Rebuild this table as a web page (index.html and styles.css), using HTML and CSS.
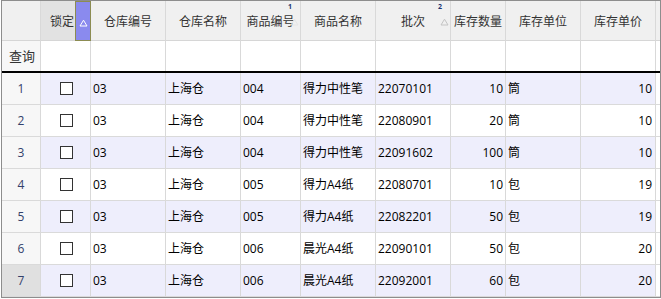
FILE: index.html
```html
<!DOCTYPE html>
<html lang="zh">
<head>
<meta charset="utf-8">
<link rel="stylesheet" href="styles.css">
</head>
<body>
<div class="grid">
  <div class="row head">
    <div class="c rh"></div>
    <div class="c lock-h"><span class="lbl">锁定</span><span class="sort-btn"><svg class="tri" width="9" height="8" viewBox="0 0 9 8"><path d="M4.5 1.2 L8 7 L1 7 Z" fill="none" stroke="currentColor" stroke-width="1"/></svg></span></div>
    <div class="c">仓库编号</div>
    <div class="c">仓库名称</div>
    <div class="c">商品编号<span class="ord">1</span><svg class="tri-abs faint" width="9" height="8" viewBox="0 0 9 8"><path d="M4.5 1.2 L8 7 L1 7 Z" fill="none" stroke="currentColor" stroke-width="1"/></svg></div>
    <div class="c">商品名称</div>
    <div class="c">批次<span class="ord">2</span><svg class="tri-abs" width="9" height="8" viewBox="0 0 9 8"><path d="M4.5 1.2 L8 7 L1 7 Z" fill="none" stroke="currentColor" stroke-width="1"/></svg></div>
    <div class="c">库存数量</div>
    <div class="c">库存单位</div>
    <div class="c">库存单价</div>
    <div class="c fill"></div>
  </div>

  <div class="row query">
    <div class="c rh q">查询</div>
    <div class="c"></div><div class="c"></div><div class="c"></div><div class="c"></div><div class="c"></div>
    <div class="c"></div><div class="c"></div><div class="c"></div><div class="c"></div>
    <div class="c fill"></div>
  </div>

  <div class="row data alt">
    <div class="c rh">1</div><div class="c ck"><span class="cb"></span></div>
    <div class="c">03</div><div class="c">上海仓</div><div class="c">004</div><div class="c">得力中性笔</div><div class="c">22070101</div>
    <div class="c num">10</div><div class="c">筒</div><div class="c num last">10</div><div class="c fill"></div>
  </div>
  <div class="row data">
    <div class="c rh">2</div><div class="c ck"><span class="cb"></span></div>
    <div class="c">03</div><div class="c">上海仓</div><div class="c">004</div><div class="c">得力中性笔</div><div class="c">22080901</div>
    <div class="c num">20</div><div class="c">筒</div><div class="c num last">10</div><div class="c fill"></div>
  </div>
  <div class="row data alt">
    <div class="c rh">3</div><div class="c ck"><span class="cb"></span></div>
    <div class="c">03</div><div class="c">上海仓</div><div class="c">004</div><div class="c">得力中性笔</div><div class="c">22091602</div>
    <div class="c num">100</div><div class="c">筒</div><div class="c num last">10</div><div class="c fill"></div>
  </div>
  <div class="row data">
    <div class="c rh">4</div><div class="c ck"><span class="cb"></span></div>
    <div class="c">03</div><div class="c">上海仓</div><div class="c">005</div><div class="c">得力A4纸</div><div class="c">22080701</div>
    <div class="c num">10</div><div class="c">包</div><div class="c num last">19</div><div class="c fill"></div>
  </div>
  <div class="row data alt">
    <div class="c rh">5</div><div class="c ck"><span class="cb"></span></div>
    <div class="c">03</div><div class="c">上海仓</div><div class="c">005</div><div class="c">得力A4纸</div><div class="c">22082201</div>
    <div class="c num">50</div><div class="c">包</div><div class="c num last">19</div><div class="c fill"></div>
  </div>
  <div class="row data">
    <div class="c rh">6</div><div class="c ck"><span class="cb"></span></div>
    <div class="c">03</div><div class="c">上海仓</div><div class="c">006</div><div class="c">晨光A4纸</div><div class="c">22090101</div>
    <div class="c num">50</div><div class="c">包</div><div class="c num last">20</div><div class="c fill"></div>
  </div>
  <div class="row data alt">
    <div class="c rh cur">7</div><div class="c ck"><span class="cb"></span></div>
    <div class="c">03</div><div class="c">上海仓</div><div class="c">006</div><div class="c">晨光A4纸</div><div class="c">22092001</div>
    <div class="c num">60</div><div class="c">包</div><div class="c num last">20</div><div class="c fill"></div>
  </div>
</div>
</body>
</html>
```

FILE: styles.css
```css
body {
  margin: 0;
  background: #fff;
  font-family: "Open Sans", "Noto Sans CJK SC", sans-serif;
  font-size: 12px;
  color: #000;
}

.grid {
  margin-left: 1px;
  width: 660px;
  height: 298px;
  box-sizing: border-box;
  border: 1px solid #8d8d8d;
  background: #fff;
  overflow: hidden;
}

.row {
  display: grid;
  grid-template-columns: 39px 50px 75px 75px 60px 75px 75px 55px 75px 75px 1fr;
  box-sizing: border-box;
}

.c {
  box-sizing: border-box;
  border-right: 1px solid #d9d9d9;
  display: flex;
  align-items: center;
  padding: 0 2px;
  white-space: nowrap;
  overflow: hidden;
  min-width: 0;
  line-height: 16px;
}

.head {
  height: 40px;
}

.head .c {
  position: relative;
  background: #f0f0f0;
  color: #333;
  justify-content: center;
  padding-top: 2px;
  border-bottom: 1px solid #d6d6d6;
}

.head .lock-h {
  padding: 0;
  border-right: none;
  border-bottom: none;
  background: #e2e2e2;
  align-items: stretch;
}

.lock-h .lbl {
  flex: 1;
  display: flex;
  align-items: center;
  justify-content: center;
  padding: 2px 0 0 8px;
  border-bottom: 1px solid #d6d6d6;
}

.sort-btn {
  width: 16px;
  box-sizing: border-box;
  background: #8a8aee;
  border: 1px solid #8c8c52;
  display: flex;
  align-items: center;
  justify-content: center;
  color: #fff;
  padding-top: 3px;
}

.ord {
  position: absolute;
  top: 2px;
  right: 8px;
  font-size: 7px;
  line-height: 8px;
  font-weight: bold;
  color: #1d3570;
}

.tri-abs {
  position: absolute;
  top: 17px;
  right: 1px;
  color: #c4c4c4;
}

.tri-abs.faint {
  color: #e6e6e6;
}

.query {
  height: 32px;
  border-bottom: 2px solid #000;
}

.data {
  height: 32px;
  border-bottom: 1px solid #dadada;
}

.data.alt {
  background: #eeeefc;
}

.rh {
  background: #f7f7f7;
  justify-content: center;
  color: #33416b;
}

.rh.q {
  justify-content: flex-start;
  padding-left: 7px;
  color: #333;
  font-size: 13px;
}

.rh.cur {
  background: #e0e0e0;
}

.fill {
  border-right: none;
  background: #fff;
}

.ck {
  justify-content: center;
  padding: 0 0 0 1px;
}

.cb {
  width: 13px;
  height: 13px;
  box-sizing: border-box;
  border: 1px solid #333;
  background: #fff;
}

.num {
  justify-content: flex-end;
}

.num.last {
  padding-right: 3px;
}
```
